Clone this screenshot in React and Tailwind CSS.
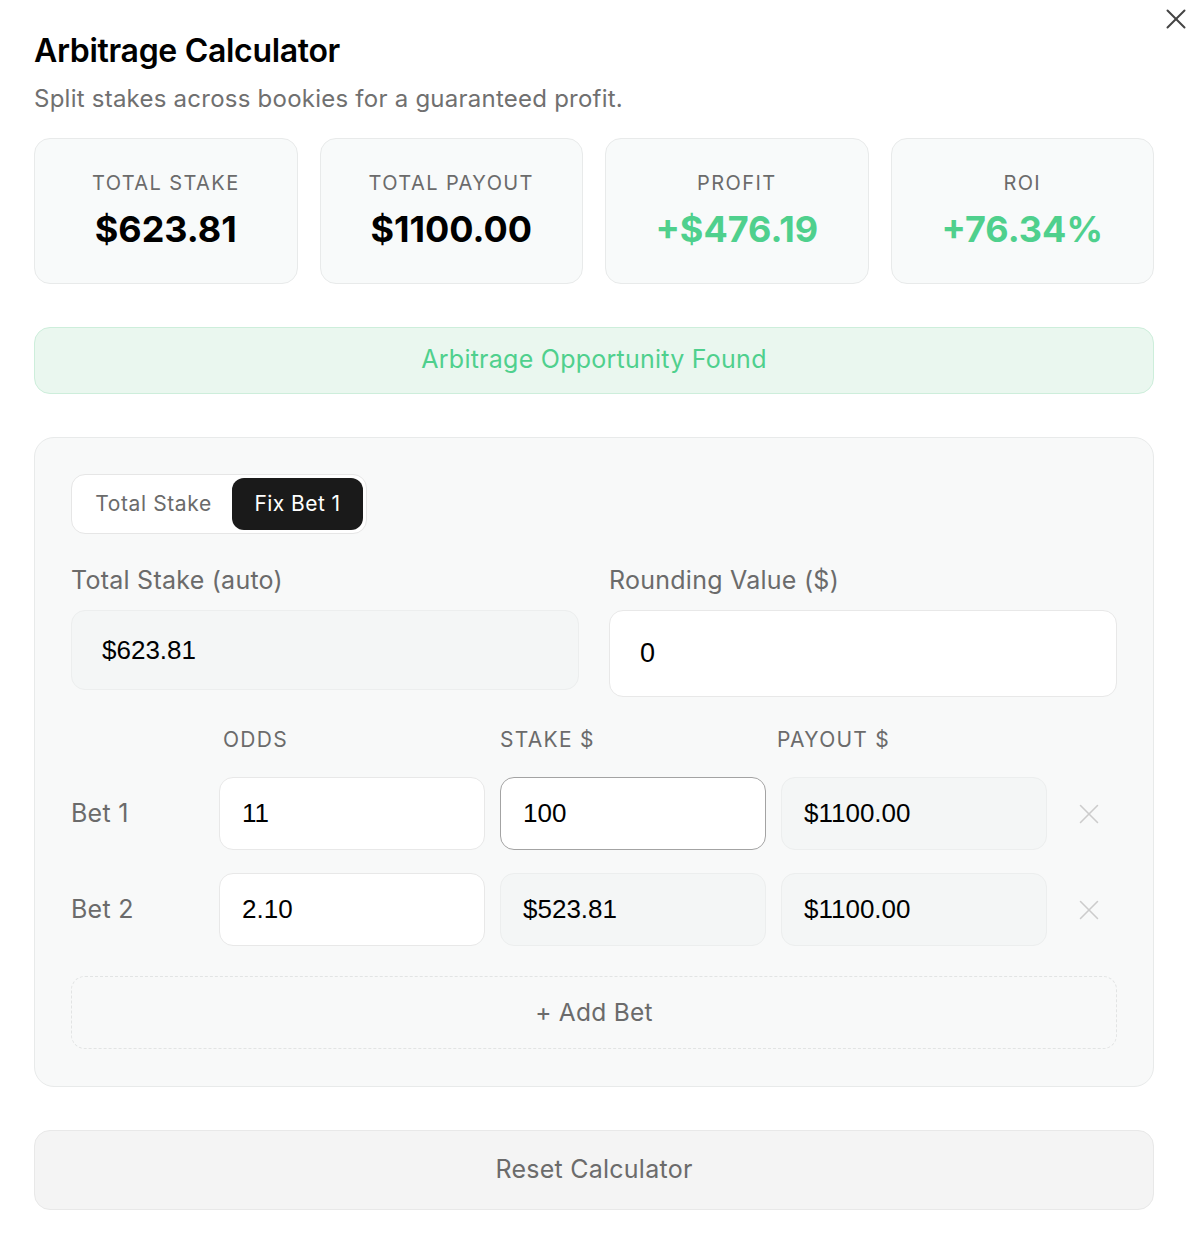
import React from "react";
import { X } from "lucide-react";

const stats = [
  { label: "TOTAL STAKE", value: "$623.81", green: false },
  { label: "TOTAL PAYOUT", value: "$1100.00", green: false },
  { label: "PROFIT", value: "+$476.19", green: true },
  { label: "ROI", value: "+76.34%", green: true },
];

const bets = [
  { name: "Bet 1", odds: "11", stake: "100", payout: "$1100.00", fixed: true },
  { name: "Bet 2", odds: "2.10", stake: "$523.81", payout: "$1100.00", fixed: false },
];

const inputFont = { fontFamily: '"Liberation Sans", Arial, sans-serif' };

function Field({ value, readOnly, focused }) {
  const base =
    "h-[73px] w-[266px] rounded-[14px] flex items-center px-[22px] text-[26px] text-black";
  if (readOnly) {
    return (
      <div className={`${base} bg-[#f4f6f6] border border-[#eceeee]`} style={inputFont}>
        {value}
      </div>
    );
  }
  return (
    <div
      className={`${base} bg-white border ${focused ? "border-[#a3a3a3]" : "border-[#e8e8e8]"}`}
      style={inputFont}
    >
      {value}
    </div>
  );
}

export default function App() {
  return (
    <div
      className="relative min-h-[1240px] bg-white px-[34px] pt-[31px] text-[#111]"
      style={{ fontFamily: 'Inter, "Noto Sans", sans-serif' }}
    >
      <button className="absolute right-[-1px] top-[2px] text-[#444]">
        <X size={34} strokeWidth={1.4} />
      </button>

      <h1 className="text-[32px] font-semibold leading-[40px] tracking-[-0.01em] text-black">
        Arbitrage Calculator
      </h1>
      <p className="mt-[12px] text-[24px] leading-[32px] tracking-[0.01em] text-[#707070]">
        Split stakes across bookies for a guaranteed profit.
      </p>

      <div className="mt-[23px] flex w-[1120px] gap-[22px]">
        {stats.map((s) => (
          <div
            key={s.label}
            className="flex h-[146px] flex-1 flex-col items-center justify-center rounded-[16px] border border-[#e8eaea] bg-[#f8fafa] pb-[4px]"
          >
            <div className="text-[20px] leading-[26px] tracking-[0.07em] text-[#6b6b6b]">
              {s.label}
            </div>
            <div
              className={`mt-[13px] text-[36px] font-bold leading-[40px] ${
                s.green ? "text-[#4fd08d]" : "text-black"
              }`}
            >
              {s.value}
            </div>
          </div>
        ))}
      </div>

      <div className="mt-[43px] flex h-[67px] w-[1120px] items-center justify-center rounded-[16px] border border-[#cdeedb] bg-[#eaf7ef] pb-[1px] text-[25px] tracking-[0.01em] text-[#4fd08d]">
        Arbitrage Opportunity Found
      </div>

      <div className="mt-[43px] w-[1120px] rounded-[20px] border border-[#e8eaea] bg-[#f8f9f9] px-[36px] pt-[36px] pb-[37px]">
        <div className="flex w-[296px] items-center rounded-[14px] border border-[#e6e6e6] bg-white p-[3px]">
          <div className="flex h-[52px] flex-1 items-center justify-center text-[21px] tracking-[0.03em] text-[#6b6b6b]">
            Total Stake
          </div>
          <div className="flex h-[52px] w-[131px] items-center justify-center rounded-[12px] bg-[#1a1a1a] text-[21px] tracking-[0.02em] text-white">
            Fix Bet 1
          </div>
        </div>

        <div className="mt-[30px] grid grid-cols-2 gap-[30px]">
          <div>
            <div className="text-[25px] leading-[32px] tracking-[0.01em] text-[#6b6b6b]">
              Total Stake (auto)
            </div>
            <div
              className="mt-[14px] flex h-[80px] items-center rounded-[14px] border border-[#eceeee] bg-[#f4f6f6] px-[30px] text-[26px] text-black"
              style={inputFont}
            >
              $623.81
            </div>
          </div>
          <div>
            <div className="text-[25px] leading-[32px] tracking-[0.01em] text-[#6b6b6b]">
              Rounding Value ($)
            </div>
            <div
              className="mt-[14px] flex h-[87px] items-center rounded-[14px] border border-[#e8e8e8] bg-white px-[30px] text-[27px] text-black"
              style={inputFont}
            >
              0
            </div>
          </div>
        </div>

        <div className="mt-[30px] flex items-center text-[21px] leading-[26px] tracking-[0.06em] text-[#6b6b6b]">
          <div className="w-[148px]" />
          <div className="w-[266px] pl-[4px]">ODDS</div>
          <div className="ml-[15px] w-[266px]">STAKE $</div>
          <div className="ml-[11px] w-[266px]">PAYOUT $</div>
        </div>

        <div className="mt-[24px] flex flex-col gap-[23px]">
          {bets.map((b) => (
            <div key={b.name} className="flex items-center">
              <div className="w-[148px] text-[25px] tracking-[0.01em] text-[#6b6b6b]">
                {b.name}
              </div>
              <Field value={b.odds} />
              <div className="ml-[15px]">
                <Field value={b.stake} readOnly={!b.fixed} focused={b.fixed} />
              </div>
              <div className="ml-[15px]">
                <Field value={b.payout} readOnly />
              </div>
              <div className="flex flex-1 justify-center pl-[13px] text-[#cccccc]">
                <X size={34} strokeWidth={1.1} />
              </div>
            </div>
          ))}
        </div>

        <div className="mt-[30px] flex h-[73px] items-center justify-center rounded-[14px] border border-dashed border-[#e2e4e4] text-[24.5px] tracking-[0.01em] text-[#6b6b6b]">
          + Add Bet
        </div>
      </div>

      <button className="mt-[43px] flex h-[80px] w-[1120px] items-center justify-center rounded-[16px] border border-[#e8e8e8] bg-[#f4f4f4] text-[25px] tracking-[0.01em] text-[#6b6b6b]">
        Reset Calculator
      </button>
    </div>
  );
}
